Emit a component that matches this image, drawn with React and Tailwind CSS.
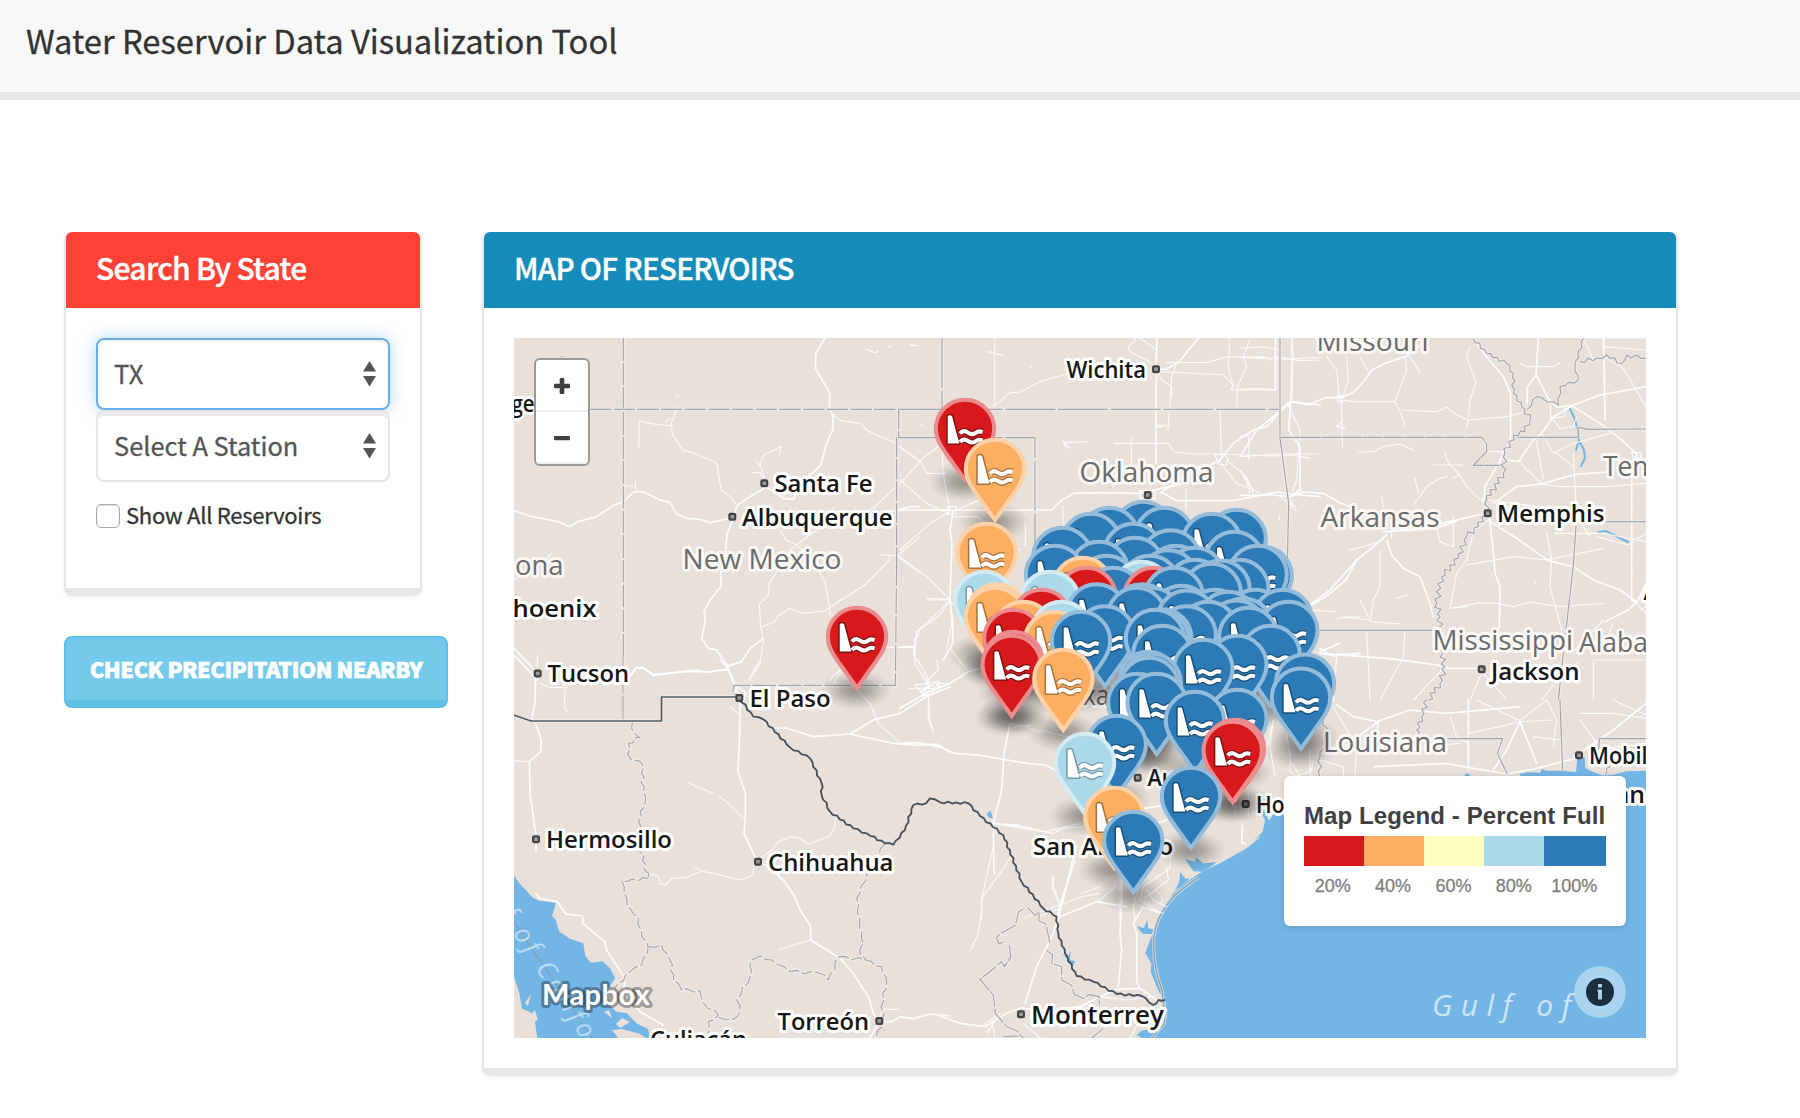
import React from "react";

const SANS = "font-['Noto_Sans_CJK_SC',sans-serif]";

const PIN_COLORS = {
  r: { fill: "#d7191c", rim: "#ea8c8e", ink: "#7d0f11" },
  o: { fill: "#fdae61", rim: "#fed2a8", ink: "#a9713a" },
  l: { fill: "#abd9e9", rim: "#d3ebf3", ink: "#7599a6" },
  b: { fill: "#2c7bb6", rim: "#94bcda", ink: "#1a4e77" },
};

/* [colour, centre x, top y] measured in thirds of a pixel from (900, 330) */
const PINS = [
  ["r", 195, 204], ["o", 285, 324], ["b", 730, 510], ["b", 628, 528], ["b", 793, 528],
  ["b", 1010, 534], ["b", 573, 546], ["b", 935, 546], ["o", 260, 576], ["b", 700, 576],
  ["b", 487, 588], ["b", 812, 595], ["b", 1003, 600], ["b", 705, 618], ["b", 597, 630],
  ["b", 465, 642], ["b", 828, 642], ["b", 1088, 645], ["b", 1073, 642], ["b", 885, 648], ["b", 805, 655],
  ["b", 620, 672], ["b", 750, 672], ["o", 548, 678], ["b", 885, 684], ["b", 1018, 684], ["b", 962, 686],
  ["l", 725, 690], ["b", 935, 696], ["b", 640, 708], ["r", 560, 708], ["r", 760, 708], ["b", 822, 708],
  ["l", 253, 720], ["l", 450, 720], ["b", 725, 757], ["b", 590, 757], ["o", 290, 757], ["b", 845, 762],
  ["o", 285, 768], ["b", 755, 768], ["b", 710, 768], ["r", 425, 774], ["b", 945, 774], ["b", 1065, 774],
  ["b", 1148, 774], ["b", 860, 776], ["b", 985, 780], ["b", 1030, 800], ["b", 1010, 806], ["b", 925, 810],
  ["o", 370, 810], ["l", 485, 810], ["b", 1165, 810], ["b", 615, 823], ["b", 860, 823], ["r", -129, 828],
  ["b", 1045, 828], ["b", 787, 832], ["b", 778, 834], ["r", 340, 834], ["b", 765, 834], ["o", 462, 840],
  ["b", 543, 840], ["b", 787, 882], ["b", 1112, 882], ["r", 340, 900], ["r", 335, 912],
  ["b", 1012, 912], ["b", 910, 924], ["o", 490, 954], ["b", 745, 960], ["b", 755, 966], ["b", 748, 978], ["b", 1215, 968],
  ["b", 1203, 1010], ["b", 712, 1026], ["b", 770, 1026], ["b", 1012, 1074], ["b", 885, 1080],
  ["b", 650, 1152], ["r", 1005, 1164], ["r", 998, 1170], ["l", 555, 1206], ["b", 873, 1308],
  ["o", 643, 1368], ["b", 700, 1440],
];

const DAM = "M-17.3 18Q-15.2 16.6 -13 18L-8.8 34L-5.6 45.6H-17.3Z";
const WAVES = "M-5 35.6C-2.6 32.6 0.4 32.8 3 34.6S8.4 36.8 11 34.6S15.4 33.4 17.6 34M-5 44C-2.6 41 0.4 41.2 3 43S8.4 45.2 11 43S15.4 41.8 17.6 42.4";

function Pin({ kind, x, y }) {
  const c = PIN_COLORS[kind];
  return (
    <g transform={`translate(${x} ${y})`}>
      <path
        d="M0 1.8C16.2 1.8 29.2 14.8 29.2 31C29.2 41 23.5 49 17.5 57.5L0 82L-17.5 57.5C-23.5 49 -29.2 41 -29.2 31C-29.2 14.8 -16.2 1.8 0 1.8Z"
        fill={c.fill}
        stroke={c.rim}
        strokeWidth="4"
      />
      <g stroke={c.ink} strokeLinejoin="round" fill="none">
        <path d={DAM} strokeWidth="3" />
        <path d={WAVES} strokeWidth="6.6" />
      </g>
      <path d={DAM} fill="#fff" />
      <path d={WAVES} fill="none" stroke="#fff" strokeWidth="4" />
    </g>
  );
}

/* Turns a coarse polyline into a meandering one. */
function meander(points, amp, step) {
  let d = `M${points[0][0]} ${points[0][1]}`;
  let k = 0;
  for (let i = 1; i < points.length; i++) {
    const [ax, ay] = points[i - 1];
    const [bx, by] = points[i];
    const len = Math.hypot(bx - ax, by - ay);
    const n = Math.max(1, Math.round(len / step));
    for (let j = 1; j <= n; j++) {
      k++;
      const t = j / n;
      const off = j === n ? 0 : (k % 2 ? 1 : -1) * amp * (0.45 + 0.55 * Math.abs(Math.sin(k * 2.3)));
      const x = ax + (bx - ax) * t - ((by - ay) / len) * off;
      const y = ay + (by - ay) * t + ((bx - ax) / len) * off;
      d += `L${x.toFixed(1)} ${y.toFixed(1)}`;
    }
  }
  return d;
}

function Sector({ x, y, children }) {
  return <g transform={`translate(${x} ${y}) scale(0.33333)`}>{children}</g>;
}

function Roads({ major = [], minor = [] }) {
  return (
    <g fill="none" stroke="#fff" strokeLinejoin="round" strokeLinecap="round">
      <path d={major.join("")} strokeWidth="5" opacity="0.95" />
      <path d={minor.join("")} strokeWidth="3.4" opacity="0.85" />
    </g>
  );
}

function Border({ d, dash }) {
  return (
    <g fill="none" strokeLinejoin="round">
      <path d={d} stroke="#f1ebe7" strokeWidth="11" opacity="0.7" />
      <path d={d} stroke="#a2a6aa" strokeWidth="3.4" strokeDasharray={dash} />
    </g>
  );
}

const CITIES = [
  ["Santa Fe", 774.5, 492, 98], ["Albuquerque", 742, 526, 150.5], ["hoenix", 512.5, 616.7, 84],
  ["Tucson", 547.5, 681.7, 81.5], ["ge", 511.5, 412, 23], ["El Paso", 749.5, 706.7, 81],
  ["Hermosillo", 546, 848, 126], ["Chihuahua", 768, 870.7, 125.5], ["Torreón", 777.5, 1030, 91.5],
  ["Culiacán", 650, 1048, 97], ["Monterrey", 1031, 1024, 133, 25.5], ["San Antonio", 1033, 855, 140],
  ["Austin", 1147.5, 785.7, 67], ["Houston", 1256, 812.7, 86], ["Wichita", 1066.5, 378, 79.5],
  ["Memphis", 1497, 522.3, 107.5], ["Jackson", 1491, 680, 88.5], ["Mobile", 1589, 763.5, 71],
  ["an", 1615, 803, 30], ["Atlanta", 1643.5, 599.5, 80],
];

const STATES = [
  ["New Mexico", 682.5, 569, 159], ["ona", 515, 575, 48.5], ["Texas", 1056, 705, 65],
  ["Oklahoma", 1079.5, 482, 134], ["Missouri", 1316.5, 351, 112], ["Arkansas", 1320.5, 526.5, 119],
  ["Tennessee", 1603, 476, 131], ["Mississippi", 1432.5, 650, 140.5], ["Alabama", 1579, 652, 108],
  ["Louisiana", 1323, 752, 124],
];

const DOTS = [
  [764.3, 483.3], [732.3, 516.7], [537.7, 673.5], [739.3, 698], [536, 839.3], [758, 861.7],
  [879.3, 1021], [1021, 1014.3], [1245.7, 804], [1137.7, 777.7], [1156, 369.3], [1147.7, 495],
  [1487.7, 513.3], [1481.7, 669.3], [1579, 755.3],
];

function BaseMap() {
  return (
    <>
      <rect x="514" y="338" width="1132" height="700" fill="#e8e0d9" />

      {/* open water */}
      <g fill="#73b5e5">
        <Sector x={1260} y={700}>
          <path d="M1158 212L1100 214L1060 224L1025 226L995 214L976 205L974 172L952 174L948 216L905 212L860 212L845 207L840 218L800 217L778 222L790 240L600 250L72 330L40 340L30 362L20 380L0 405V1014H1158Z" />
          <path d="M612 228L622 219L632 228Z" />
        </Sector>
        <Sector x={940} y={800}>
          <path d="M1035 55L1010 70L970 105L920 145L840 190L800 208L775 222L735 250L700 280L665 330L645 375L640 400L628 425L616 460L634 490L632 515L650 560L664 588L676 605L680 650L655 690L630 688L604 692L590 705L606 714H1300V55Z" />
          <path d="M960 35L975 60L968 95L940 125L965 105L990 88L1000 60L1030 58L1010 45L985 60L975 30ZM736 178L765 185L768 172L790 190L830 186L812 200L785 215L760 214L748 196ZM720 215L735 235L748 238L720 262L705 270L718 245Z" />
          <path d="M590 378L612 384L622 360L625 385L640 388L636 402L610 402L600 392ZM140 42L152 32L158 56L146 52ZM366 462L384 470L392 452L390 480L406 484L396 502L386 480Z" />
        </Sector>
        <Sector x={500} y={660}>
          <path d="M42 648L60 672L100 715L118 722L168 728L156 768L166 778L178 815L210 836L250 850L256 888L272 908L308 904L330 925L345 955L326 985L320 1030L350 1055L380 1060L410 1090L445 1108L450 1134H112L104 1080L90 1056L66 1046L58 1000L42 950Z" />
        </Sector>
        <path d="M560 357L561.5 356L563 357Z" />
      </g>
      <g fill="#e8e0d9">
        <path d="M525 1003L531 994L528 1006ZM531 1014L535 1010L538 1020L533 1022ZM604 1012L609 1010L612 1018ZM616 1024L622 1018L630 1022L620 1028ZM612 1030L622 1029L640 1034L646 1038H618Z" />
      </g>
      <path d="M1199 877.5Q1160 900 1154 935Q1152 965 1162 990L1165 1015L1164 1024L1152 1038" fill="none" stroke="#cfdde6" strokeWidth="3.4" opacity="0.8" />
      <path d="M1199 877.5Q1160 900 1154 935Q1152 965 1162 990L1165 1015L1164 1024L1152 1038" fill="none" stroke="#8c98a2" strokeWidth="1.1" />
      <g fill="none" stroke="#73b5e5" strokeWidth="2" strokeLinecap="round">
        <path d="M1570 409L1574 417L1578 430L1579 440L1576 450M1579 441L1584 450L1585 458L1581 466M1598.5 532L1606 531L1616 536L1628 542" />
      </g>

      {/* highways */}
      <Sector x={500} y={320}>
        <Roads
          major={[
            "M42 572L90 588L170 604L210 620L230 606L290 590L340 556L370 546L400 516L430 515L475 538L510 548L530 582L560 595L600 598L630 608L665 600L700 592L712 556L750 530L792 505",
            "M975 54L948 100L946 145L990 220L988 262L1000 290L998 330L978 375L962 436L930 466L900 490L880 538L850 535L820 512L795 502",
            "M700 595L682 640L676 700L662 760L664 798L630 840L612 875L616 905L605 955L625 985L650 990L680 1035L700 1080",
            "M42 985L80 1025L104 1050M385 1075L408 1043L430 1042L460 1064L520 1058L590 1050L620 1056L682 1048L680 1038L725 1025L750 985L790 955M1142 576L1190 572L1230 560L1260 560",
          ]}
          minor={[
            "M416 382L418 302L450 310L510 318L530 270L528 262M515 318L516 340L550 392L580 398L650 430L658 480L665 510L690 530L708 552M528 222L530 228L538 230M496 304L512 296",
            "M370 498H406V480M406 498L410 512M780 436L768 424M780 432L792 404L820 392L842 378L838 408M758 458H780L790 478M780 432L792 470",
            "M1000 285L1020 302L1082 310L1100 330L1140 350L1180 365L1220 395L1260 425L1220 470L1140 545L1120 565L1080 580L950 630L895 670L870 690L830 755L808 790L805 825L778 852L782 920L790 960L780 1030L750 1080",
            "M840 630L858 660L890 674L935 720L975 785L988 860L990 890M785 920L825 905L832 890L866 866L910 880L978 872M980 868L1010 848L1095 795L1168 720V705M1142 704L1192 708L1260 650M1192 708L1260 760M1150 982H1242L1245 955L1260 940M42 780L80 750L140 715L155 698M1260 1035L1240 1005V980M1098 88L1126 98L1136 92M1164 82L1175 78M1230 76H1250M112 1005V1040M990 1080L1020 1050",
          ]}
        />
      </Sector>
      <Sector x={900} y={330}>
        <Roads
          major={[
            "M0 540H455L480 515L520 490L600 488L720 490L790 474L850 462M790 490L830 512H1000L1060 500L1130 486L1170 492L1260 500M768 400V180L770 120",
            "M770 24V60L768 118M895 24L840 92L800 118L775 118M960 390L900 420L850 440L780 490M960 390L1000 340L1060 300L1100 290L1140 245L1175 215L1260 225",
            "M160 540L150 600L156 640L154 690L150 810L158 870V940L130 990",
          ]}
          minor={[
            "M284 24V226L278 232L330 188L360 186L420 155L500 132M266 65L308 76M390 108L394 112M30 46H46M62 284L68 288M0 352L60 392L80 430H138M60 392L120 345L128 370V418L140 490L150 540",
            "M150 545L90 580L0 660M148 552L80 520L0 450M160 560L230 560L330 640L360 660M170 540L260 500M0 680L80 740L150 808L82 806M150 812L100 860L60 895L44 930V990M150 815L200 860L220 880M376 580V650M406 660L380 700",
            "M700 24L708 30L684 50L690 65L740 90L768 112M720 24L770 60M775 125L920 132L970 134L1000 165L992 180H1128V24M800 98L920 97L985 80L1080 85L1140 82L1200 92L1260 90M988 24V70L984 110L1000 170M1050 30L1030 80L1040 110L1012 170L1010 230M768 118L785 150L815 170V200M830 100L815 140L812 200L808 235",
            "M642 340H805L822 366L880 372H950L1128 378L1170 374L1230 385M768 285H800V300M806 250V300M768 290L790 290M960 240L964 380M500 352L490 338L560 335M490 334L512 356M694 322V400M858 476V540M1046 320V390M980 390L1040 440L1060 490M960 395L1010 460L1080 488M550 420L548 440M632 440L640 475M488 528L490 590M0 950H44M1176 24L1172 210M1160 215L1200 300L1190 450L1165 520L1190 545M1165 530L1180 510",
          ]}
        />
        <path d="M945 375L970 372L985 385L978 405L955 402ZM720 482H765V505H720ZM142 530H168V552H142Z" fill="none" stroke="#fff" strokeWidth="3.4" />
      </Sector>
      <Sector x={1240} y={320}>
        <Roads
          major={[
            "M0 410L50 330L100 290L130 262L152 245L205 254L260 232L298 234L340 218L375 180L395 150L440 128L500 108L530 85L560 62",
            "M152 245L146 330L180 380V510L150 530L190 516L250 520L300 548L330 560M150 530L100 525L0 526M600 612L735 580M440 635L590 625L650 602",
            "M440 645L400 680L350 720L318 780L260 828L215 855M440 660L455 705L490 745L540 770L570 850L580 890",
            "M700 60L740 110L790 170L812 220V350L795 400L770 440L735 500L730 550L745 575M760 550L830 500L905 492L980 470L1020 462L1120 455",
            "M748 590L760 700L765 760L780 800L778 920L768 940M750 605L830 655L925 722L1000 740L1060 780L1140 810L1190 845L1165 870L1095 905",
            "M1218 200L1080 225L1000 255L940 290L905 340L880 360L835 425L800 420M1000 260L1080 310L1140 355L1190 402L1175 480V840L1190 850L1218 790",
            "M862 250V200L888 165L895 54M888 165L925 235L950 262L1000 255M1090 54L1092 110L1095 300",
            "M620 1040L520 1025L440 1015L240 1000M735 1045L620 1045",
          ]}
          minor={[
            "M0 208L60 205L105 210V54M0 112L70 110L90 120L240 112M155 54L160 110L155 240M0 85L60 80L130 90M260 110L290 150L298 234M320 110L325 180L304 245L308 380M308 300L290 320L315 325M385 155L360 110M298 240L340 245H405L465 245L500 150L495 110M465 245L485 285L495 318M485 270L590 275L620 262L650 285L685 300L680 322M685 300L800 290L860 275M510 110L540 160",
            "M690 80L680 110L708 185L690 240L685 290M840 130L860 140H940L960 128M355 396L400 395L430 380L480 372L520 390M0 410L120 402H235M0 350L30 345M615 400L625 430L660 465L680 500L710 530L735 545M580 435H670M655 465L640 475M520 555L560 500L600 475L620 470M525 475L535 520M425 530L430 560M118 585V600M330 690L370 680L430 660M420 690V800L400 840L390 905L480 912M390 900L310 890M360 840L385 890M470 835L500 825M745 600L700 635L680 720L650 760L630 865L680 860",
            "M640 590V680L600 665L590 625M680 735L820 710L920 720L1090 685M920 640L935 720L930 800L965 930M630 865L720 848L770 850L820 860L870 846L960 860L1090 850M905 490L850 440L840 420M890 365L910 480M905 340L940 400L1000 370L1110 340M1000 400L1010 590L1050 650M950 400L1000 440M905 492L960 500L1100 500L1218 490M745 540L900 560M945 640L1090 640L1218 665M1218 640L1165 675L1070 650M932 250V290L960 325L1000 320L1010 290M930 295L975 290V255M1092 54V80L1218 90M1100 110L1060 120L1030 54M1092 110L1150 145L1218 260M1218 54H1040",
            "M1000 995L1090 900M1060 1020H1218M1020 1025L960 1070L905 1140M1060 1025V1140M725 1060L690 1140M730 1060L800 1140M1190 850L1218 880M1120 910L1100 960M1200 870L1218 860M380 935L390 1140M495 935L490 1010L420 1140M610 1045L520 1140M240 1000L290 1010L280 1140M885 780V792M740 395H790L775 430M120 530L165 560L150 545",
          ]}
        />
        <path d="M285 228H315M290 240L310 250M425 635H455V655M1175 395L1205 400L1200 415H1180ZM0 450L20 480L30 520M10 470L40 510" fill="none" stroke="#fff" strokeWidth="3.4" />
      </Sector>
      <Sector x={500} y={660}>
        <Roads
          major={[
            "M110 200L124 240L122 275L88 305L90 400L108 530V572M110 200L96 175L106 120V50",
            "M720 120V160L718 250L714 335L736 400V470L732 520L765 590L850 660L885 710L900 750L932 798V840L1020 895L1060 940L1085 980L1105 1010L1120 1060L1138 1085",
            "M42 -15L85 30L110 60M385 60L408 22L430 25L460 46L560 34L620 36L682 28M720 110L680 20L660 0M682 20L725 5",
            "M108 700L118 715L172 725L198 762L248 768V790L314 845L320 870L375 955L372 985L420 1055L490 1095",
            "M820 205L858 204L940 230L1050 222L1125 178L1200 160L1280 110L1350 80M1050 222L1180 250L1255 256L1310 252L1350 276",
            "M1138 1085H1175L1200 1070L1240 1076L1290 1062L1350 1068M1138 1085L1110 1134",
          ]}
          minor={[
            "M42 302L88 306M120 70L150 82H200L194 90V145L202 155M690 140L715 160L720 165M740 100L720 140M745 60L780 0M565 368L600 385L640 400M655 408L680 425L730 475",
            "M585 622L610 635L640 640L680 650L720 660L755 648L765 600M445 640L475 648L480 670L495 675L515 655L560 652L600 635M1004 475L1005 500L990 528L925 552L900 535L870 530L835 545L815 570L775 600M835 870L932 840M1140 1070L1150 1048H1195",
            "M1060 80L1110 130L1135 190L1200 248M1255 0L1285 60V180L1300 215M1310 0L1315 30L1285 60L1270 100M1020 40L1000 70M1290 95L1320 70L1350 72",
          ]}
        />
        <path d="M708 80L735 95L730 125L705 118ZM700 95L720 75M1245 75L1315 65L1320 92L1275 108Z" fill="none" stroke="#fff" strokeWidth="3.4" />
      </Sector>
      <Sector x={900} y={560}>
        <Roads
          major={[
            "M0 550L60 548L120 562L165 580L240 586L380 610L435 615L465 630L500 660L560 690M80 400L0 445M80 400L150 370L205 335L260 320M330 490L312 580L305 690L280 790",
            "M525 900L480 1035L470 1080M1260 265L1290 285L1380 280M1260 275L1320 250M1370 0L1290 90L1230 135",
            "M640 850L740 800L800 780M700 720L730 745L800 735M730 790L700 850L670 900",
          ]}
          minor={[
            "M150 120H82M150 120L120 165L50 215L44 310L90 380M150 125L215 180L260 230M150 265L200 330M140 265L155 190L150 120M30 385H120L110 370L70 385L90 410M60 395L100 375M85 400L90 480L100 515M280 790L282 880V942M280 790L370 800L435 815L545 790M280 790L360 795M330 490L380 500L430 520",
            "M280 860L245 1015V1080M460 950V980L480 1030M600 1000L545 1010L370 1075M660 950V1080M715 985L700 1040L705 1080M545 1000L600 980M740 1045L790 1060M800 920L805 960L740 1010M1025 790V850L1035 853M1120 480L1100 560L1050 620M1160 520L1170 600L1200 650M1240 600L1230 648M1230 150L1305 155M1310 175L1380 170M420 510L500 530M340 500L400 495",
          ]}
        />
        <path d="M730 1015L770 990L790 1020L760 1040ZM985 720H1080M990 740H1070M1005 700V770M1045 700V770M1060 710V770" fill="none" stroke="#fff" strokeWidth="3.4" opacity="0.6" />
      </Sector>
      <Sector x={940} y={800}>
        <Roads
          major={[
            "M400 170L365 320L340 400L290 500L255 610M248 622L200 640L135 680L60 670L0 648M250 625L330 630L420 620L480 590L530 568L600 565L650 600M345 345L360 350L470 305L500 310L560 320M545 240V300L540 400L545 450L535 560M610 320L580 370L590 400V545L600 565",
          ]}
          minor={[
            "M160 60V200L165 222M210 175L180 220L125 295V330L115 400L92 450M336 232V262L360 320M480 300L530 255M690 120V205L610 260L600 300L660 340M620 270L640 300L680 320M605 320L660 340M910 80L905 125L918 132M300 352L320 340L365 325M130 675L180 640L140 700M155 660L165 714M250 670L300 714M600 660L570 714M480 590L560 600L640 590M160 70L340 100L370 85L430 80",
          ]}
        />
      </Sector>
      <Sector x={1260} y={700}>
        <Roads
          major={["M230 15L280 50L350 65L450 30L560 40L780 20M355 65L350 110M625 0V210M355 65L240 150M342 200L450 195L560 190L640 205L740 222M740 222L830 205L945 175M1158 10L1060 90L1000 130L945 170M780 65L740 150L700 210M780 65L830 190"]}
          minor={["M220 20L260 90L290 130L285 228M570 50L590 110L625 130M625 100L720 80L780 65L880 60M860 0L890 60L880 140M650 0L780 62L860 0M960 40H1060L1158 55M1060 0L1158 45M400 150L600 130M1010 130L960 60M180 180L250 200V228M820 110L900 120M990 150L1158 130M40 60L30 140L45 228M90 150V215L110 228L150 215V150"]}
        />
      </Sector>

      {/* state and provincial borders */}
      <Sector x={500} y={320}>
        <Border d="M370 54V1080" dash="68 6" />
        <Border d="M270 268H1260" dash="64 7" />
        <Border d="M1196 268V352H1260M1190 352V720" dash="60 6" />
        <Border d="M1190 720L1186 1096H910" dash="78 7" />
      </Sector>
      <Sector x={900} y={330}>
        <Border d="M126 24V238M0 238H1140M0 323H405V560" dash="150 8" />
        <Border d="M1140 24V323L1166 520L1162 700M1140 323H1260" />
        <path d="M405 560V700" stroke="#a2a6aa" strokeWidth="3.4" />
      </Sector>
      <Sector x={1240} y={320}>
        <Border d="M120 352H726L740 372V395L700 436H790" dash="60 2" />
        <Border d="M830 352H1015V322L1045 328L1218 327M1040 605H1218M1008 618L1000 735L965 1045L955 1140M240 931H600" />
        <Border d={meander([[700, 56], [740, 100], [800, 130], [820, 160], [820, 220], [855, 268]], 5, 12)} />
        <Border d={meander([[855, 268], [870, 300], [855, 335], [820, 345], [795, 400], [790, 460], [740, 540], [742, 575], [715, 620], [680, 650], [655, 715], [605, 770], [590, 850], [600, 890], [600, 990], [615, 1040], [600, 1090], [565, 1140]], 9, 11)} />
        <Border d={meander([[862, 268], [890, 230], [955, 255], [960, 200], [1015, 180], [1005, 140], [1030, 54]], 4, 16)} />
        <Border d={meander([[1020, 125], [1070, 115], [1100, 105], [1145, 130], [1160, 105], [1218, 115]], 6, 14)} />
      </Sector>
      <Sector x={1260} y={700}>
        <Border d={meander([[500, 0], [485, 50], [470, 90], [475, 115]], 8, 10)} />
        <Border d="M475 116H728L712 160L742 222M900 0L908 212M1018 130V116H1158M1018 130L1015 150" />
        <Border d={meander([[190, 60], [200, 100], [180, 170], [178, 228]], 6, 14)} />
        <Border d={meander([[1060, 180], [1040, 205], [1035, 228]], 5, 12)} />
      </Sector>
      <Sector x={500} y={660}>
        <path d="M369 -10V183" stroke="#c9c5c2" strokeWidth="6" strokeDasharray="110 7" />
        <Border d={meander([[405, 183], [395, 205], [418, 232], [385, 250], [390, 295], [425, 310], [430, 395], [435, 430], [420, 455], [420, 560], [445, 655]], 5, 15)} dash="34 8" />
        <Border d={meander([[445, 655], [366, 664], [372, 700], [390, 745], [415, 775], [425, 830], [445, 860], [425, 915], [390, 935], [345, 985]], 4, 17)} dash="34 8" />
        <Border d={meander([[445, 860], [485, 855], [510, 900], [520, 960], [545, 990], [600, 992], [612, 1030], [655, 1065], [625, 1085], [625, 1120]], 5, 17)} dash="34 8" />
        <Border d={meander([[655, 1072], [700, 1078], [720, 1055], [710, 1020], [750, 950], [755, 900], [780, 888], [830, 912], [870, 935], [955, 938], [985, 960], [1018, 890], [1095, 900], [1145, 920], [1160, 970], [1148, 1000], [1148, 1080], [1130, 1134]], 5, 20)} dash="34 8" />
        <Border d={meander([[1155, 550], [1100, 645], [1070, 715], [1078, 800], [1090, 850], [1080, 880], [1100, 902]], 4, 20)} dash="34 8" />
        <Border d="M905 76H702L698 98L715 110" dash="70 7" />
      </Sector>
      <Sector x={940} y={800}>
        <Border d="M298 335L285 346L260 320M248 328L236 335L226 376L182 400L170 412L176 432L194 425M208 435L212 470L194 500L184 485L150 515L120 538L160 585L166 640L200 680L230 692L250 714M190 710L235 708M298 340L296 362L318 372L330 432M320 452L338 465L335 490L365 500V540L395 556L402 582L432 596L446 584L478 590V614M490 685L455 714" dash="50 5" />
      </Sector>

      {/* international border */}
      <g fill="none" strokeLinejoin="round">
        <path d="M514 715L531 721H661.5V697H739" stroke="#f1ebe7" strokeWidth="4" opacity="0.8" />
        <path d="M514 715L531 721H661.5V697H739" stroke="#4f5c68" strokeWidth="1.7" />
        <Sector x={500} y={660}>
          <path d={meander([[718, 114], [760, 170], [790, 178], [870, 262], [930, 295], [965, 370], [965, 405], [990, 455], [1060, 505], [1100, 520], [1155, 550], [1180, 554], [1215, 510], [1240, 435], [1278, 430], [1290, 415], [1320, 427]], 3, 13)} stroke="#46535f" strokeWidth="5.5" />
        </Sector>
        <Sector x={940} y={800}>
          <path d={meander([[0, 7], [85, 10], [120, 48], [190, 105], [245, 245], [310, 325], [350, 350], [355, 400], [375, 460], [410, 528], [460, 545], [530, 582], [605, 588], [640, 615], [655, 600], [675, 600]], 3, 13)} stroke="#46535f" strokeWidth="5.5" />
        </Sector>
      </g>

      {/* labels */}
      <g fontFamily="'Open Sans', sans-serif">
        {DOTS.map(([x, y]) => (
          <rect key={`${x}-${y}`} x={x - 2.9} y={y - 2.9} width="5.8" height="5.8" rx="1.2" fill="#999" stroke="#444" strokeWidth="2.2" />
        ))}
        <g fontSize="28" fill="#6b6b6b" stroke="#fbf8f6" strokeWidth="6" strokeLinejoin="round" paintOrder="stroke">
          {STATES.map(([t, x, y, w]) => (
            <text key={t} x={x} y={y} textLength={w} lengthAdjust="spacingAndGlyphs">{t}</text>
          ))}
        </g>
        <g fontWeight="600" fill="#161616" stroke="#fff" strokeWidth="6" strokeLinejoin="round" paintOrder="stroke">
          {CITIES.map(([t, x, y, w, size]) => (
            <text key={t} x={x} y={y} fontSize={size || 24} textLength={w} lengthAdjust="spacingAndGlyphs">{t}</text>
          ))}
        </g>
        <text x="1432" y="1016" textLength="139" fontSize="30" fontStyle="italic" fill="#cfe5f6">Gulf of</text>
        <path d="M514 922L592 1038" stroke="#7f9db5" strokeWidth="1.2" strokeDasharray="14 3" />
        <path id="cortez" d="M500 914L656 1154" fill="none" />
        <text fontSize="26" fontStyle="italic" fill="#b9daf2" letterSpacing="4">
          <textPath href="#cortez">f of California</textPath>
        </text>
      </g>
    </>
  );
}

function ReservoirMap() {
  return (
    <div className="relative h-[700px] w-[1132px] overflow-hidden">
      <svg className="block" width="1132" height="700" viewBox="514 338 1132 700">
        <defs>
          <radialGradient id="pinShadow">
            <stop offset="0" stopColor="#000" stopOpacity="0.4" />
            <stop offset="0.35" stopColor="#000" stopOpacity="0.28" />
            <stop offset="0.75" stopColor="#000" stopOpacity="0.08" />
            <stop offset="1" stopColor="#000" stopOpacity="0" />
          </radialGradient>
        </defs>
        <BaseMap />
        {PINS.map(([k, x, y], i) => (
          <ellipse key={i} cx={900 + x / 3 - 1} cy={330 + y / 3 + 84} rx="36" ry="20" fill="url(#pinShadow)" opacity="0.9" />
        ))}
        {PINS.map(([k, x, y], i) => (
          <Pin key={i} kind={k} x={900 + x / 3} y={330 + y / 3} />
        ))}
        <text x="542" y="1005" textLength="108" fontFamily="Lato, sans-serif" fontWeight="700" fontSize="29" fill="#fff" stroke="#000" strokeOpacity="0.32" strokeWidth="6" strokeLinejoin="round" paintOrder="stroke">
          Mapbox
        </text>
      </svg>

      <div className="absolute left-[20px] top-[20px] flex h-[108px] w-[56px] flex-col overflow-hidden rounded-[6px] border-2 border-[#999] bg-white">
        <button className="flex h-[52px] items-center justify-center border-b-2 border-[#eee] pt-[2px]">
          <svg width="16" height="16" viewBox="0 0 16 16" fill="#404040">
            <rect x="0" y="5.7" width="16" height="4.6" rx="1" />
            <rect x="5.7" y="0" width="4.6" height="16" rx="1" />
          </svg>
        </button>
        <button className="flex h-[52px] items-center justify-center border-b-2 border-[#eee] pt-[2px]">
          <svg width="16" height="16" viewBox="0 0 16 16" fill="#404040">
            <rect x="0" y="6" width="16" height="4.2" rx="1" />
          </svg>
        </button>
      </div>

      <div className="absolute right-[20px] top-[438px] h-[150px] w-[342px] rounded-[6px] bg-white px-5 pt-[28px] font-['Liberation_Sans',Arial,sans-serif] shadow-[0_1px_6px_rgba(0,0,0,0.15)]">
        <div className="h-[32px] whitespace-nowrap text-[24px] leading-[24px] font-bold tracking-[0.1px] text-[#404040]">
          Map Legend - Percent Full
        </div>
        <div className="flex h-[30px]">
          <span className="w-[60px] bg-[#d7191c]" />
          <span className="w-[60px] bg-[#fdae61]" />
          <span className="w-[60px] bg-[#ffffbf]" />
          <span className="w-[60px] bg-[#abd9e9]" />
          <span className="w-[62px] bg-[#2c7bb6]" />
        </div>
        <div className="mt-[10px] -ml-[1.5px] flex text-center text-[18px] leading-[20px] text-[#808080] [-webkit-text-stroke:0.3px_#808080]">
          {["20%", "40%", "60%", "80%", "100%"].map((p) => (
            <span key={p} className="w-[60.4px]">{p}</span>
          ))}
        </div>
      </div>

      <div className="absolute right-[20px] top-[628px] flex h-[52px] w-[52px] items-center justify-center rounded-full bg-white/40">
        <svg width="28" height="28" viewBox="0 0 28 28">
          <circle cx="14" cy="14" r="14" fill="#1c2d3b" />
          <path d="M12 6H16V9.6H12ZM11.4 11.4H16V21.6H12V13.6H11.4Z" fill="#a9d2f0" />
        </svg>
      </div>
    </div>
  );
}

function Arrows() {
  return (
    <svg width="13" height="26" viewBox="0 0 13 26" fill="#555">
      <path d="M6.5 0L13 10.5H0ZM0 15H13L6.5 25.5Z" />
    </svg>
  );
}

export default function App() {
  return (
    <div className={`h-[1118px] w-[1800px] overflow-hidden bg-white ${SANS}`}>
      <header className="flex h-[100px] border-b-8 border-[#e6e6e6] bg-[#f8f8f8] pl-[26px] pt-[16px]">
        <h1 className="whitespace-nowrap text-[32.7px] leading-[48px] text-[#333] [-webkit-text-stroke:0.3px_#333]">Water Reservoir Data Visualization Tool</h1>
      </header>

      <main className="flex items-start pl-[64px] pt-[132px]">
        <aside className="w-[418px] shrink-0">
          <section className="h-[364px] w-[358px] rounded-[8px] border-x-2 border-b-8 border-[#e6e6e6] bg-white shadow-[0_2px_4px_rgba(0,0,0,0.05)]">
            <div className="flex h-[76px] items-center rounded-t-[6px] bg-[#ff4136] pb-[6px] pl-[30px]">
              <h2 className="whitespace-nowrap text-[30px] leading-[40px] font-medium tracking-[-0.7px] text-white [-webkit-text-stroke:0.4px_#fff]">Search By State</h2>
            </div>
            <div className="px-[30px] pt-[30px]">
              <div className="flex h-[72px] items-center justify-between rounded-[8px] border-2 border-[#66afe9] bg-white pl-[16px] pr-[12px] shadow-[inset_0_2px_2px_rgba(0,0,0,0.06),0_0_16px_rgba(102,175,233,0.5)]">
                <span className="-mt-[2px] text-[25.5px] leading-[40px] text-[#555] [-webkit-text-stroke:0.3px_#555]">TX</span>
                <Arrows />
              </div>
              <div className="flex h-[72px] items-center justify-between rounded-[8px] border-2 border-[#e6e6e6] bg-white pl-[16px] pr-[12px] shadow-[inset_0_4px_0_#ececec]">
                <span className="-mt-[2px] whitespace-nowrap text-[25.4px] leading-[40px] text-[#555] [-webkit-text-stroke:0.3px_#555]">Select A Station</span>
                <Arrows />
              </div>
              <label className="mt-[20px] flex h-[28px] items-center gap-[6px]">
                <span className="h-[24px] w-[24px] rounded-[5px] border-[1.5px] border-[#aaa] bg-white shadow-[inset_0_1px_2px_rgba(0,0,0,0.15)]" />
                <span className="-mt-[4px] whitespace-nowrap text-[22px] leading-[28px] tracking-[-0.25px] text-[#333] [-webkit-text-stroke:0.3px_#333]">Show All Reservoirs</span>
              </label>
            </div>
          </section>
          <button className="mt-[40px] flex h-[72px] w-[384px] items-center justify-center rounded-[8px] border-2 border-b-8 border-[#5dc0e7] bg-[#75caeb]">
            <span className="whitespace-nowrap text-[21.8px] leading-[30px] font-black tracking-[-0.4px] text-white [-webkit-text-stroke:0.7px_#fff]">CHECK PRECIPITATION NEARBY</span>
          </button>
        </aside>

        <section className="h-[844px] w-[1196px] shrink-0 rounded-[8px] border-x-2 border-b-8 border-[#e6e6e6] bg-white shadow-[0_2px_4px_rgba(0,0,0,0.05)]">
          <div className="flex h-[76px] items-center rounded-t-[6px] bg-[#158cba] pb-[6px] pl-[30px]">
            <h2 className="whitespace-nowrap text-[29.5px] leading-[40px] font-medium tracking-[-0.7px] text-white [-webkit-text-stroke:0.4px_#fff]">MAP OF RESERVOIRS</h2>
          </div>
          <div className="p-[30px]">
            <ReservoirMap />
          </div>
        </section>
      </main>
    </div>
  );
}
